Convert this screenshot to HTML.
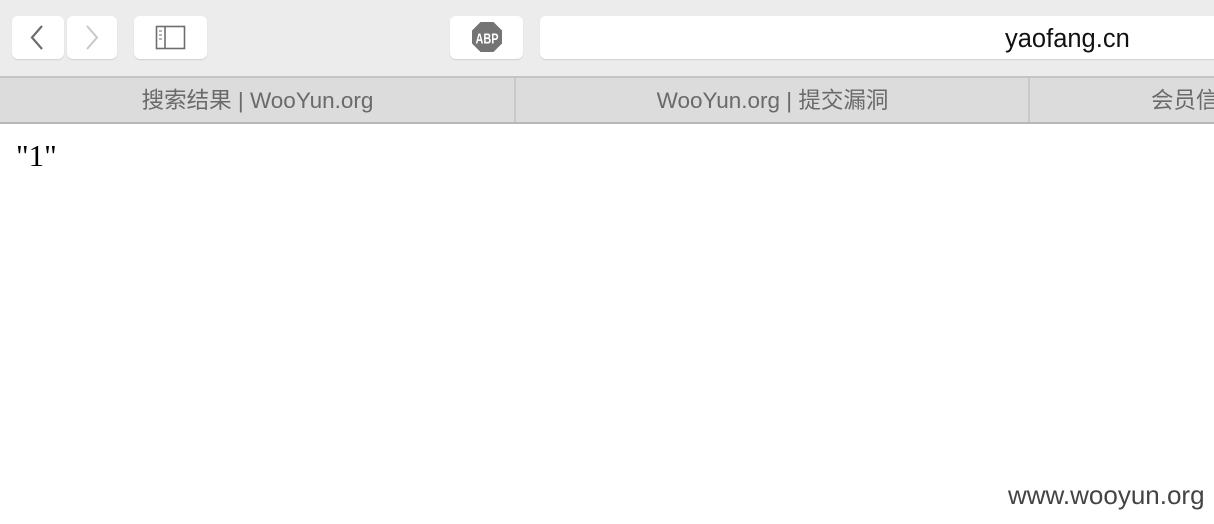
<!DOCTYPE html>
<html><head><meta charset="utf-8"><style>
body{margin:0;width:1214px;height:524px;overflow:hidden;background:#fff;position:relative;font-family:"Liberation Sans","Noto Sans CJK SC",sans-serif}
.tb{position:absolute;left:0;top:0;width:1214px;height:76px;background:#ececec}
.btn{position:absolute;background:#fff;border-radius:6px;box-shadow:0 1px 1px rgba(0,0,0,.12);top:16px;height:43px}
.tabs{position:absolute;left:0;top:76px;width:1214px;background:#dcdcdc;border-top:2px solid #c4c4c4;border-bottom:2px solid #b8b8b8;box-sizing:border-box;height:48px;overflow:hidden}
.tab{position:absolute;top:1px;height:44px;line-height:44px;text-align:center;color:#6a6a6a;font-size:22.5px;white-space:nowrap}
.sep{position:absolute;top:0;width:2px;height:44px;background:#c8c8c8}
</style></head><body>
<div class="tb">
<div class="btn" style="left:12px;width:52px"><svg width="52" height="43"><path d="M30 10 L20 21.5 L30 33" stroke="#6e6e6e" stroke-width="2.2" fill="none"/></svg></div>
<div class="btn" style="left:67px;width:50px"><svg width="50" height="43"><path d="M20 10 L30 21.5 L20 33" stroke="#c8c8c8" stroke-width="2" fill="none"/></svg></div>
<div class="btn" style="left:134px;width:73px"><svg width="73" height="43"><rect x="22.5" y="10.5" width="28" height="22" stroke="#6e6e6e" stroke-width="1.6" fill="none"/><line x1="31" y1="10" x2="31" y2="33" stroke="#6e6e6e" stroke-width="1.6"/><path d="M25 15h3M25 19h3M25 23h3" stroke="#888" stroke-width="1.3"/></svg></div>
<div class="btn" style="left:450px;width:73px"><svg width="73" height="43"><polygon points="30.5,6 43.5,6 52,14.5 52,27.5 43.5,36 30.5,36 22,27.5 22,14.5" fill="#747474"/><text x="25.5" y="27.5" textLength="23" lengthAdjust="spacingAndGlyphs" fill="#fff" font-size="15" font-weight="bold" font-family="Liberation Sans">ABP</text></svg></div>
<div class="btn" style="left:540px;width:700px;border-radius:6px 0 0 6px"><div style="position:absolute;left:465px;top:9px;font-size:25.5px;color:#111">yaofang.cn</div></div>
</div>
<div class="tabs">
<div class="tab" style="left:0;width:515px">搜索结果 | WooYun.org</div>
<div class="sep" style="left:514px"></div>
<div class="tab" style="left:516px;width:513px">WooYun.org | 提交漏洞</div>
<div class="sep" style="left:1028px"></div>
<div class="tab" style="left:1151px;text-align:left">会员信息</div>
</div>
<div style="position:absolute;left:16px;top:138px;font-family:'Liberation Serif',serif;font-size:31px;color:#000">"1"</div>
<div style="position:absolute;left:1008px;top:480px;font-size:26px;color:#444">www.wooyun.org</div>
</body></html>
